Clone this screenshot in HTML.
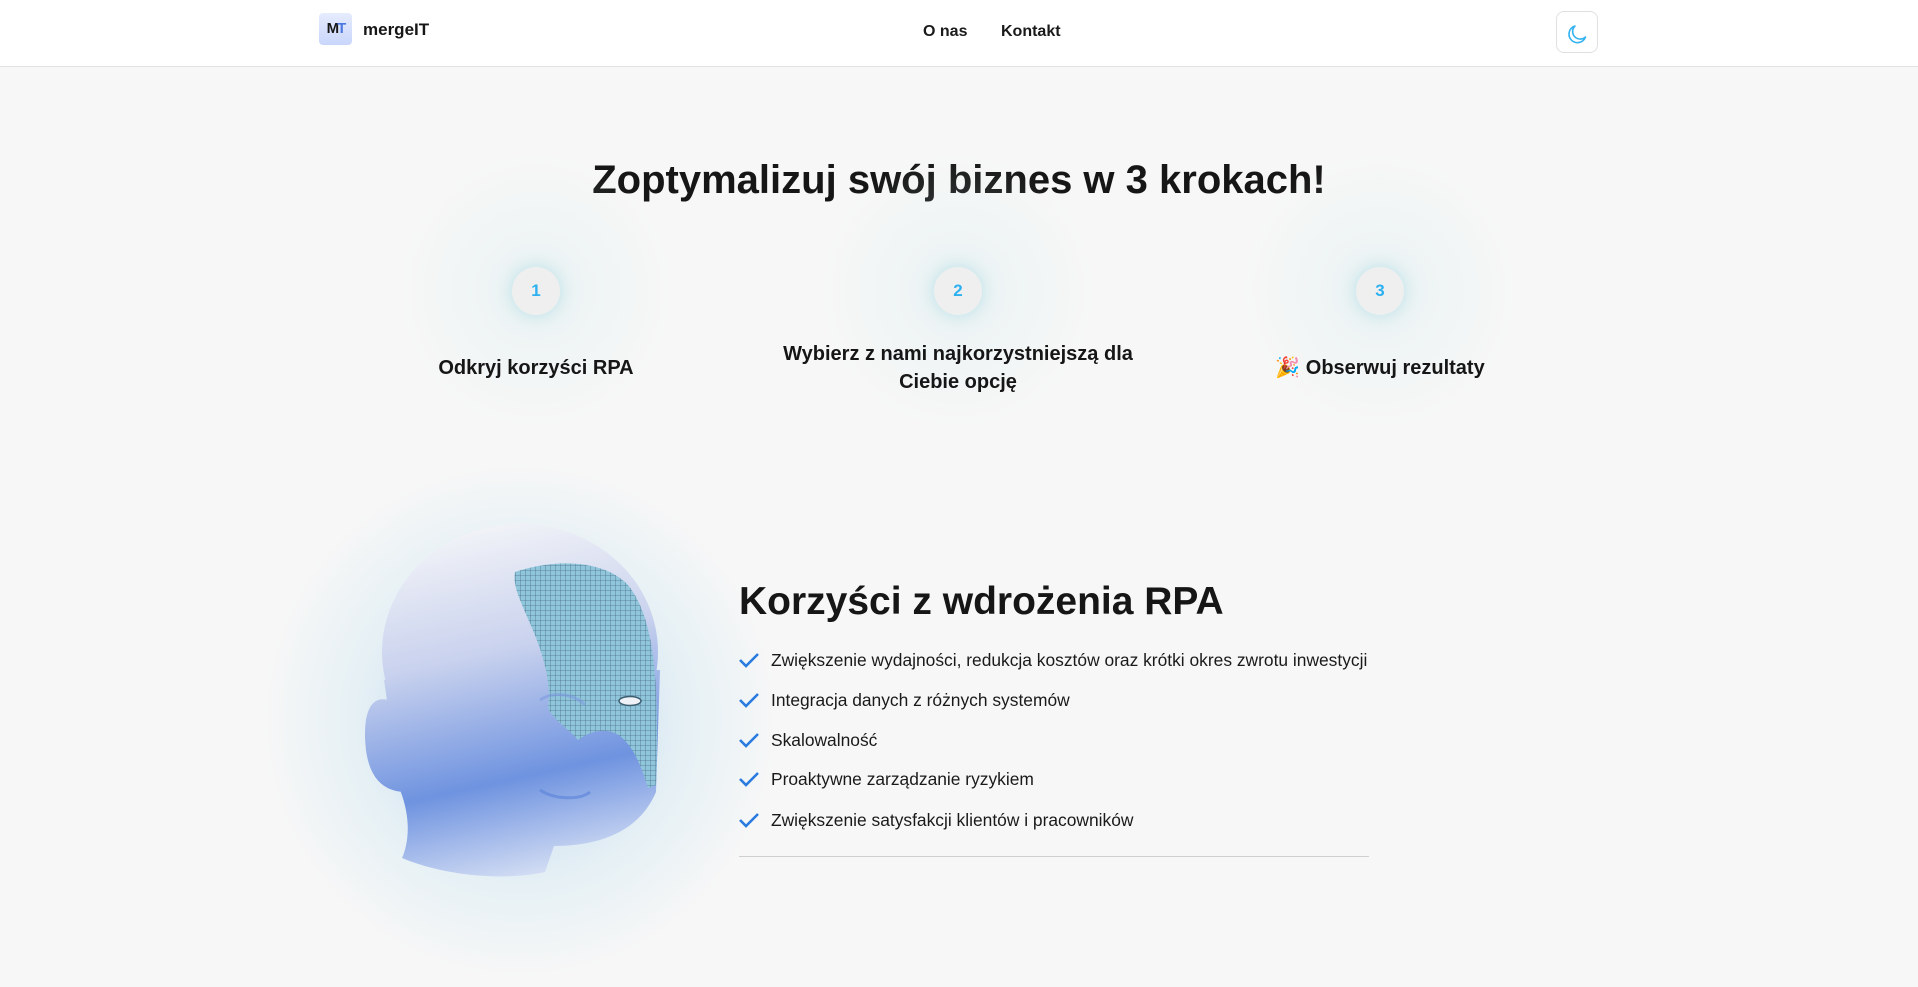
<!DOCTYPE html>
<html><head><meta charset="utf-8"><style>
*{margin:0;padding:0;box-sizing:border-box}
body{width:1918px;height:987px;overflow:hidden;background:#f7f7f7;font-family:"Liberation Sans",sans-serif;color:#161616;position:relative}
header{position:absolute;left:0;top:0;width:1918px;height:67px;background:#fff;border-bottom:1px solid #e2e2e2}
.logo{position:absolute;left:319px;top:13px;width:33px;height:32px;border-radius:4px;background:linear-gradient(#e6ecff,#c9d6fb);font-weight:bold;font-size:15px;letter-spacing:-2px;text-align:center;line-height:32px}
.logo span{color:#4a78e0}
.brand{position:absolute;left:363px;top:20px;font-size:17px;font-weight:bold}
.nav{position:absolute;top:23px;font-size:16px;font-weight:bold;color:#1a1a1a}
.moon{position:absolute;left:1556px;top:11px;width:42px;height:42px;border:1px solid #e0e0e0;border-radius:8px;background:#fff}
h1{position:absolute;left:0;width:1918px;top:158px;text-align:center;font-size:40px;font-weight:bold}
.glow{position:absolute;width:300px;height:300px;border-radius:50%;background:radial-gradient(circle,rgba(210,235,238,.35),rgba(247,247,247,0) 65%)}
.c{position:absolute;width:48px;height:48px;border-radius:50%;background:#efefef;color:#2db0f0;font-weight:bold;font-size:17px;text-align:center;line-height:48px;box-shadow:0 0 18px rgba(120,200,215,.45)}
.lab{position:absolute;width:420px;text-align:center;font-size:20px;font-weight:bold;line-height:28px}
h2{position:absolute;left:739px;top:580px;font-size:39px;font-weight:bold}
.li{position:absolute;left:771px;font-size:17.4px;color:#1a1a1a}
.ck{position:absolute;left:738px}
</style></head><body>
<header>
<div class="logo">M<span>T</span></div>
<div class="brand">mergeIT</div>
<div class="nav" style="left:923px">O nas</div>
<div class="nav" style="left:1001px">Kontakt</div>
<div class="moon"><svg width="42" height="42" viewBox="0 0 42 42"><path d="M18 14 A8.5 8.5 0 1 0 28.5 25 A7 7 0 0 1 18 14 Z" fill="none" stroke="#33b2f0" stroke-width="1.6" stroke-linejoin="round"/></svg></div>
</header>
<h1>Zoptymalizuj swój biznes w 3 krokach!</h1>
<div class="glow" style="left:386px;top:141px"></div>
<div class="glow" style="left:808px;top:141px"></div>
<div class="glow" style="left:1230px;top:141px"></div>
<div class="c" style="left:512px;top:267px">1</div>
<div class="c" style="left:934px;top:267px">2</div>
<div class="c" style="left:1356px;top:267px">3</div>
<div class="lab" style="left:326px;top:354px">Odkryj korzyści RPA</div>
<div class="lab" style="left:748px;top:340px">Wybierz z nami najkorzystniejszą dla<br>Ciebie opcję</div>
<div class="lab" style="left:1170px;top:354px">🎉 Obserwuj rezultaty</div>

<div style="position:absolute;left:260px;top:460px;width:520px;height:520px;border-radius:50%;background:radial-gradient(circle,rgba(120,170,235,.45),rgba(190,225,240,.3) 45%,rgba(247,247,247,0) 70%)"></div>
<svg style="position:absolute;left:340px;top:500px" width="360" height="440" viewBox="0 0 360 440">
<defs>
<linearGradient id="g" gradientUnits="userSpaceOnUse" x1="150" y1="20" x2="230" y2="380"><stop offset="0" stop-color="#f3f4f8"/><stop offset=".35" stop-color="#c9d2ee"/><stop offset=".7" stop-color="#6f93e0"/><stop offset="1" stop-color="#dfe6f6"/></linearGradient>
<pattern id="m" width="5" height="5" patternUnits="userSpaceOnUse"><rect width="5" height="5" fill="#8fc6dc"/><path d="M0 0H5M0 0V5" stroke="#4c6f86" stroke-width=".8"/></pattern>
</defs>
<g fill="url(#g)">
<ellipse cx="180" cy="152" rx="138" ry="128"/>
<path d="M44 180 L60 290 C72 320 68 345 62 358 C110 378 170 380 205 372 L214 346 C262 346 300 330 316 292 L320 170 Z"/>
<path d="M48 200 C30 195 22 215 26 250 C30 280 45 292 66 292 Z"/>
</g>
<path d="M175 72 C215 58 265 60 288 85 C312 115 320 170 316 285 L308 288 C300 262 290 238 272 232 C258 228 246 234 238 240 C226 226 210 218 208 206 C212 182 202 152 192 128 C182 104 172 86 175 72 Z" fill="url(#m)"/>
<ellipse cx="290" cy="201" rx="11" ry="4.5" fill="#eef2f7" stroke="#3d5d70" stroke-width="1.5"/>
<path d="M200 290 C215 300 240 300 250 292" fill="none" stroke="#5a82d8" stroke-width="3" opacity=".6"/>
<path d="M200 200 C215 190 235 195 245 205" fill="none" stroke="#7f9be0" stroke-width="3" opacity=".6"/>
</svg>

<h2>Korzyści z wdrożenia RPA</h2>
<svg class="ck" style="top:651px" width="22" height="18" viewBox="0 0 22 18"><path d="M2 9 L8 15 L20 3" fill="none" stroke="#2a7be0" stroke-width="2.6"/></svg>
<svg class="ck" style="top:691px" width="22" height="18" viewBox="0 0 22 18"><path d="M2 9 L8 15 L20 3" fill="none" stroke="#2a7be0" stroke-width="2.6"/></svg>
<svg class="ck" style="top:731px" width="22" height="18" viewBox="0 0 22 18"><path d="M2 9 L8 15 L20 3" fill="none" stroke="#2a7be0" stroke-width="2.6"/></svg>
<svg class="ck" style="top:770px" width="22" height="18" viewBox="0 0 22 18"><path d="M2 9 L8 15 L20 3" fill="none" stroke="#2a7be0" stroke-width="2.6"/></svg>
<svg class="ck" style="top:811px" width="22" height="18" viewBox="0 0 22 18"><path d="M2 9 L8 15 L20 3" fill="none" stroke="#2a7be0" stroke-width="2.6"/></svg>
<div class="li" style="top:650px">Zwiększenie wydajności, redukcja kosztów oraz krótki okres zwrotu inwestycji</div>
<div class="li" style="top:690px">Integracja danych z różnych systemów</div>
<div class="li" style="top:730px">Skalowalność</div>
<div class="li" style="top:769px">Proaktywne zarządzanie ryzykiem</div>
<div class="li" style="top:810px">Zwiększenie satysfakcji klientów i pracowników</div>
<div style="position:absolute;left:739px;top:856px;width:630px;height:1px;background:#cfcfcf"></div>
</body></html>
